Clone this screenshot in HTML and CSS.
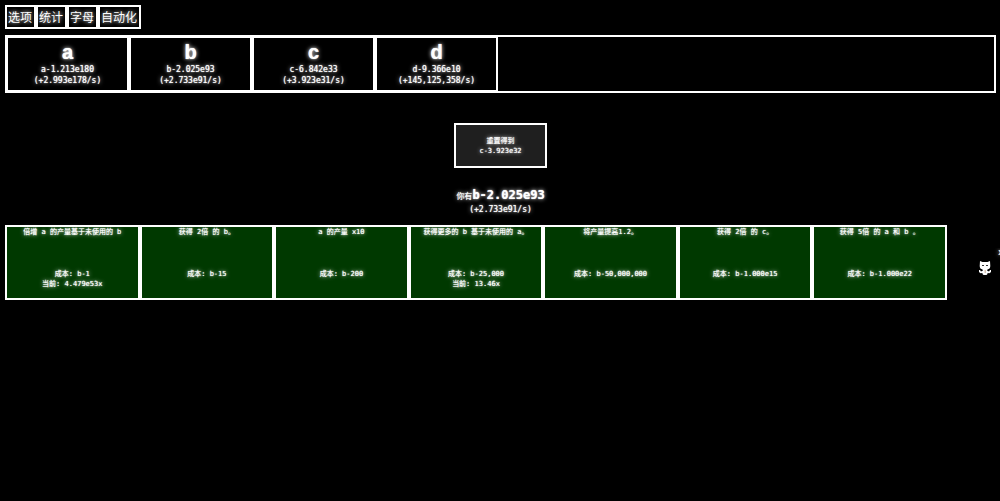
FILE: index.html
```html
<!DOCTYPE html>
<html lang="zh-CN">
<head>
<meta charset="utf-8">
<meta name="viewport" content="width=device-width, initial-scale=1">
<title>a b c d</title>
<link rel="stylesheet" href="styles.css">
</head>
<body>
<nav class="tabs">
  <button class="tab" type="button">选项</button>
  <button class="tab" type="button">统计</button>
  <button class="tab" type="button">字母</button>
  <button class="tab" type="button">自动化</button>
</nav>
<div class="letters">
  <button class="letter" type="button"><span class="letter-name">a</span><span>a-1.213e180</span><span>(+2.993e178/s)</span></button>
  <button class="letter" type="button"><span class="letter-name">b</span><span>b-2.025e93</span><span>(+2.733e91/s)</span></button>
  <button class="letter" type="button"><span class="letter-name">c</span><span>c-6.842e33</span><span>(+3.923e31/s)</span></button>
  <button class="letter" type="button"><span class="letter-name">d</span><span>d-9.366e10</span><span>(+145,125,358/s)</span></button>
</div>
<main class="layer">
  <button class="reset" type="button"><span>重置得到</span><span>c-3.923e32</span></button>
  <div class="amount">你有<strong class="amount-value">b-2.025e93</strong></div>
  <div class="rate">(+2.733e91/s)</div>
  <div class="upgrades">
    <button class="upgrade" type="button"><span class="effect">倍增 a 的产量基于未使用的 b</span><span>成本: b-1</span><span>当前: 4.479e53x</span></button>
    <button class="upgrade" type="button"><span class="effect">获得 2倍 的 b。</span><span>成本: b-15</span></button>
    <button class="upgrade" type="button"><span class="effect">a 的产量 x10</span><span>成本: b-200</span></button>
    <button class="upgrade" type="button"><span class="effect">获得更多的 b 基于未使用的 a。</span><span>成本: b-25,000</span><span>当前: 13.46x</span></button>
    <button class="upgrade" type="button"><span class="effect">将产量提高1.2。</span><span>成本: b-50,000,000</span></button>
    <button class="upgrade" type="button"><span class="effect">获得 2倍 的 c。</span><span>成本: b-1.000e15</span></button>
    <button class="upgrade" type="button"><span class="effect">获得 5倍 的 a 和 b 。</span><span>成本: b-1.000e22</span></button>
  </div>
</main>
<div class="pet">
  <span class="pet-close">x</span>
  <svg class="pet-cat" viewBox="0 0 12 14" aria-hidden="true">
    <path fill="#fff" d="M1 0L3.500 1h5L11 0l.3 5Q11.300 8 8.500 8.500L8 9.500l2 1 1-1.500h1v2l-1.500 1.300L8.500 12v1l-1 1h-3l-1-1v-1l-2 .3L0 11V9h1l1 1.500 2-1-.5-1Q.7 8 .7 5z"/>
    <path fill="#333" d="M3 4h2v1H3zM7 4h2v1H7z"/>
    <path fill="#d8c4b4" d="M5.500 9h1.500v3h-1.500z"/>
  </svg>
</div>
</body>
</html>
```
FILE: styles.css
```css
* { box-sizing: border-box; }
body {
  margin: 0;
  padding: 5px 4px 0 5px;
  min-height: 100vh;
  overflow: hidden;
  background: #000;
  color: #fff;
  font: 8px/11px "DejaVu Sans Mono", "Noto Sans CJK SC", monospace;
  text-align: center;
  text-shadow: 0 0 1px #fff, 0 0 4px #fff;
}
button {
  margin: 0;
  border: 2px solid #fff;
  background: #000;
  color: inherit;
  font: inherit;
  text-shadow: inherit;
  white-space: nowrap;
  cursor: pointer;
}
.tabs { display: flex; margin-bottom: 6px; }
.tab {
  height: 24px;
  padding: 2px 2px 0 1px;
  font-size: 12px;
  line-height: 18px;
  text-shadow: 0 0 4px #fff;
}
.letters { display: flex; border: 2px solid #fff; }
.letter {
  display: flex;
  flex-direction: column;
  align-items: center;
  width: 123px;
  margin: -1px 0;
  padding: 2px 0 4px;
}
.letter:first-child { margin-left: -1px; }
.letter-name {
  font: bold 20px/24px "Liberation Sans", sans-serif;
}
.layer {
  display: flex;
  flex-direction: column;
  align-items: center;
  padding-top: 30px;
}
.reset {
  display: flex;
  flex-direction: column;
  justify-content: center;
  align-items: center;
  width: 93px;
  height: 45px;
  padding: 0;
  background: #1f1f1f;
  font-size: 7px;
  line-height: 10px;
}
.amount { margin-top: 20px; line-height: 15px; }
.amount-value { font-size: 12px; }
.upgrades {
  display: grid;
  grid-template-columns: repeat(7, 1fr);
  align-self: stretch;
  margin: 10px 49px 0 0;
}
.upgrade {
  display: flex;
  flex-direction: column;
  align-items: center;
  height: 75px;
  padding: 0;
  background: #003900;
  font-size: 7px;
  line-height: 10px;
}
.effect { min-height: 42px; }
.pet {
  position: absolute;
  top: 248px;
  right: 0;
  width: 21px;
  overflow: hidden;
}
.pet-close { display: block; margin-right: -3px; line-height: 10px; text-align: right; }
.pet-cat { display: block; width: 12px; height: 14px; margin-top: 3px; }
```
